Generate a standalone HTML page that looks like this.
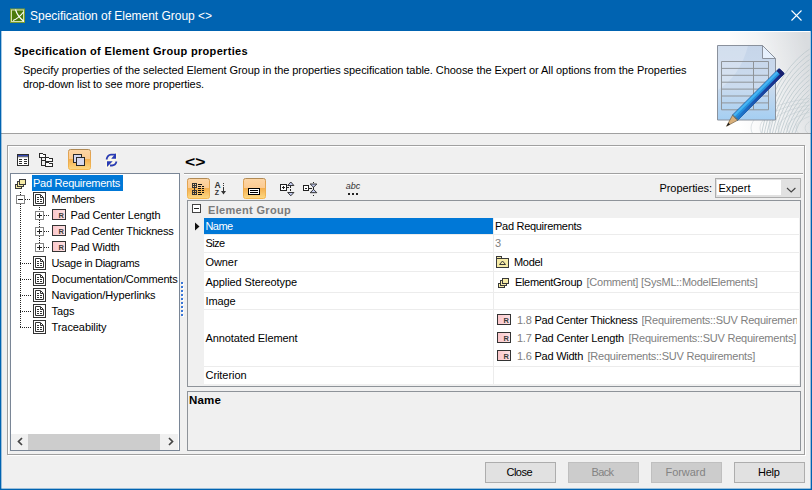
<!DOCTYPE html>
<html><head><meta charset="utf-8"><title>Specification of Element Group</title>
<style>
html,body{margin:0;padding:0}
body{width:812px;height:490px;position:relative;overflow:hidden;background:#f0f0f0;font-family:"Liberation Sans",sans-serif}
.t{position:absolute;white-space:pre;line-height:16px;height:16px}
#shapes{position:absolute;left:0;top:0}
.ic{font-family:"Liberation Sans",sans-serif}
</style></head><body>
<svg id="shapes" width="812" height="490" viewBox="0 0 812 490">
<defs>
<linearGradient id="og" x1="0" y1="0" x2="0" y2="1">
<stop offset="0" stop-color="#fdd6a6"/><stop offset="0.46" stop-color="#fccb92"/><stop offset="0.5" stop-color="#f5b050"/><stop offset="1" stop-color="#fcd984"/>
</linearGradient>
<linearGradient id="hg" x1="0" y1="0.550" x2="1" y2="0.250">
<stop offset="0" stop-color="#ffffff"/><stop offset="0.45" stop-color="#f3f4f5"/><stop offset="1" stop-color="#d9dcdf"/>
</linearGradient>
<linearGradient id="arcg" gradientUnits="userSpaceOnUse" x1="720" y1="0" x2="810" y2="0"><stop offset="0" stop-color="#e4e8ea"/><stop offset="0.5" stop-color="#eceff0"/><stop offset="1" stop-color="#f6f7f8"/></linearGradient>
<linearGradient id="docg" x1="0" y1="0" x2="0" y2="1">
<stop offset="0" stop-color="#c6d5e9"/><stop offset="0.55" stop-color="#cbdbee"/><stop offset="1" stop-color="#a4cef2"/>
</linearGradient>
<linearGradient id="pen2" x1="0" y1="0" x2="1" y2="0"><stop offset="0" stop-color="#1f7fd2"/><stop offset="0.5" stop-color="#1b4aa6"/><stop offset="1" stop-color="#1a237e"/></linearGradient>
<linearGradient id="peng" x1="0" y1="0" x2="1" y2="1">
<stop offset="0" stop-color="#1a2a80"/><stop offset="0.45" stop-color="#1a4aa8"/><stop offset="0.5" stop-color="#1e9be0"/><stop offset="1" stop-color="#35b3f0"/>
</linearGradient>
<linearGradient id="ob" x1="0" y1="0" x2="0" y2="1"><stop offset="0" stop-color="#b08a55"/><stop offset="0.15" stop-color="#e0a050"/><stop offset="1" stop-color="#f5b850"/></linearGradient>
<linearGradient id="pk" x1="0" y1="0" x2="1" y2="0"><stop offset="0" stop-color="#fbc6ca"/><stop offset="1" stop-color="#fde2e4"/></linearGradient>
<g id="eg">
<rect x="0.5" y="5.5" width="6" height="4" fill="#f6eba6" stroke="#3a3a3a"/>
<rect x="2.5" y="2.5" width="6" height="5" fill="#f6eba6" stroke="#3a3a3a"/>
<rect x="4.5" y="0.5" width="6" height="5" fill="#f6eba6" stroke="#3a3a3a"/>
</g>
<g id="ric">
<rect x="0.5" y="0.5" width="13" height="10" fill="url(#pk)" stroke="#333"/>
<text x="6.600" y="9" font-size="7.500" font-weight="bold" fill="#3a3a3a" class="ic">R</text>
</g>
<g id="doc" shape-rendering="crispEdges">
<rect x="0.5" y="0.5" width="12" height="13" fill="#fff" stroke="#333"/>
<path d="M2.500 2.500H7.500L10.500 5.500V11.500H2.500Z" fill="#fff" stroke="#333" shape-rendering="auto"/>
<path d="M7.500 3V5.500H10" fill="none" stroke="#333" shape-rendering="auto"/>
<path d="M4 5.500h2M4 7.500h2M7 7.500h2M4 9.500h2M7 9.500h2" stroke="#333"/>
</g>
<g id="plus">
<rect x="0.5" y="0.5" width="8" height="8" fill="#fff" stroke="#848484"/>
<path d="M2 4.5h5M4.5 2v5" stroke="#222"/>
</g>
<g id="minus">
<rect x="0.5" y="0.5" width="8" height="8" fill="#fff" stroke="#848484"/>
<path d="M2 4.5h5" stroke="#222"/>
</g>
</defs>
<g shape-rendering="crispEdges">
<!-- header -->
<rect x="0" y="31" width="812" height="102" fill="#fff"/>
<rect x="730" y="32" width="79.500" height="101" fill="url(#hg)"/>
<rect x="0" y="133" width="812" height="1" fill="#a0a0a0"/>
<!-- title bar -->
<rect x="0" y="0" width="812" height="31" fill="#0063b1"/>
<!-- etched panel -->
<rect x="8.5" y="146.5" width="797" height="309" fill="none" stroke="#fff"/>
<rect x="7.5" y="145.5" width="797" height="309" fill="none" stroke="#a0a0a0"/>
<!-- left toolbar selected button -->
</g>
<rect x="68.5" y="149.5" width="22" height="20" rx="2" fill="url(#og)" stroke="url(#ob)"/>
<g shape-rendering="crispEdges">
<!-- tree box -->
<rect x="10.5" y="173.5" width="169" height="277" fill="#fff" stroke="#7a8696"/>
<rect x="32" y="175" width="91" height="16" fill="#0078d7"/>
<!-- scrollbar -->
<rect x="11" y="434" width="167" height="16" fill="#f0f0f0"/>
<rect x="28" y="434" width="132" height="16" fill="#cdcdcd"/>
<!-- tree dotted lines -->
<path d="M20.5 192v4M20.5 204v124" stroke="#222" stroke-dasharray="1 1" fill="none"/>
<path d="M25 199.5h6M20 263.5h11M20 279.5h11M20 295.5h11M20 311.5h11M20 327.5h11" stroke="#222" stroke-dasharray="1 1" fill="none"/>
<path d="M39.5 207v4M39.5 220v7M39.5 236v7" stroke="#222" stroke-dasharray="1 1" fill="none"/>
<path d="M44 215.5h6M44 231.5h6M44 247.5h6" stroke="#222" stroke-dasharray="1 1" fill="none"/>
<!-- splitter dots -->
<rect x="182" y="283" width="2" height="2" fill="#fff"/><rect x="181" y="282" width="2" height="2" fill="#3a76d6"/><rect x="182" y="287" width="2" height="2" fill="#fff"/><rect x="181" y="286" width="2" height="2" fill="#3a76d6"/><rect x="182" y="291" width="2" height="2" fill="#fff"/><rect x="181" y="290" width="2" height="2" fill="#3a76d6"/><rect x="182" y="295" width="2" height="2" fill="#fff"/><rect x="181" y="294" width="2" height="2" fill="#3a76d6"/><rect x="182" y="299" width="2" height="2" fill="#fff"/><rect x="181" y="298" width="2" height="2" fill="#3a76d6"/><rect x="182" y="303" width="2" height="2" fill="#fff"/><rect x="181" y="302" width="2" height="2" fill="#3a76d6"/><rect x="182" y="307" width="2" height="2" fill="#fff"/><rect x="181" y="306" width="2" height="2" fill="#3a76d6"/><rect x="182" y="311" width="2" height="2" fill="#fff"/><rect x="181" y="310" width="2" height="2" fill="#3a76d6"/><rect x="182" y="315" width="2" height="2" fill="#fff"/><rect x="181" y="314" width="2" height="2" fill="#3a76d6"/>
<!-- right: separator -->
<rect x="184" y="173" width="619" height="1" fill="#a0a0a0"/>
<rect x="184" y="174" width="619" height="1" fill="#fff"/>
</g>
<!-- right toolbar selected buttons -->
<rect x="187.5" y="178.5" width="22" height="20" rx="2" fill="url(#og)" stroke="url(#ob)"/>
<rect x="243.5" y="178.5" width="22" height="20" rx="2" fill="url(#og)" stroke="url(#ob)"/>
<g shape-rendering="crispEdges">
<!-- combo -->
<rect x="715.5" y="178.5" width="85" height="19" fill="#e1e1e1" stroke="#adadad"/>
<rect x="717" y="180" width="64" height="15" fill="#fff"/>
<!-- table -->
<rect x="187.5" y="200.5" width="613" height="186" fill="#f0f0f0" stroke="#8e9399"/>
<rect x="204" y="218" width="595" height="166" fill="#fff"/>
<rect x="204" y="218" width="289" height="16" fill="#0078d7"/>
<path d="M204 234.5h595M204 252.5h595M204 271.5h595M204 292.5h595M204 309.5h595M204 366.5h595M493.5 218v166" stroke="#ececec" fill="none"/>
<!-- description box -->
<rect x="187.5" y="391.5" width="613" height="59" fill="#f0f0f0" stroke="#8e9399"/>
<!-- buttons -->
<rect x="485.5" y="462.5" width="70" height="20" fill="#e1e1e1" stroke="#adadad"/>
<rect x="568.5" y="462.5" width="70" height="20" fill="#cccccc" stroke="#bfbfbf"/>
<rect x="651.5" y="462.5" width="70" height="20" fill="#cccccc" stroke="#bfbfbf"/>
<rect x="734.5" y="462.5" width="70" height="20" fill="#e1e1e1" stroke="#adadad"/>
<!-- window border -->
<rect x="0" y="31" width="1" height="459" fill="#0063b1"/>
<rect x="1" y="31" width="1" height="459" fill="#0063b1" opacity="0.35"/>
<rect x="811" y="31" width="1" height="459" fill="#0063b1"/>
<rect x="810" y="31" width="1" height="459" fill="#0063b1" opacity="0.35"/>
<rect x="0" y="489" width="812" height="1" fill="#0063b1"/>
<rect x="0" y="488" width="812" height="1" fill="#0063b1" opacity="0.35"/>
</g>
<!-- ICONS -->
<!-- title icon -->
<g>
<rect x="10" y="8.500" width="15" height="14.500" fill="#7c9c2c"/>
<rect x="11.500" y="10" width="12" height="11.500" fill="#4c7a0c" stroke="#d4e0b0" stroke-width="1"/>
<path d="M15.500 9.500q2 7 8.500 12M13 20.500q6-2.500 10.500-8.500" stroke="#fff" stroke-width="1.200" fill="none"/>
</g>
<!-- close X -->
<path d="M791.5 10.5l10 10M801.5 10.5l-10 10" stroke="#fff" stroke-width="1.1" fill="none"/>
<!-- header image -->
<clipPath id="hclip"><rect x="690" y="32" width="119.500" height="101"/></clipPath>
<g clip-path="url(#hclip)">
<g fill="none" stroke="#bcc8cd" stroke-width="0.9" opacity="0.9">
<ellipse cx="845" cy="165" rx="56.0" ry="72.2"/><ellipse cx="845" cy="165" rx="58.5" ry="76.4"/><ellipse cx="845" cy="165" rx="61.0" ry="80.6"/><ellipse cx="845" cy="165" rx="63.5" ry="84.9"/><ellipse cx="845" cy="165" rx="66.0" ry="89.3"/><ellipse cx="845" cy="165" rx="68.5" ry="93.8"/><ellipse cx="845" cy="165" rx="71.0" ry="98.3"/><ellipse cx="845" cy="165" rx="73.5" ry="103.0"/><ellipse cx="845" cy="165" rx="76.0" ry="107.7"/><ellipse cx="845" cy="165" rx="78.5" ry="112.5"/><ellipse cx="845" cy="165" rx="81.0" ry="117.3"/><ellipse cx="845" cy="165" rx="83.5" ry="122.3"/><ellipse cx="845" cy="165" rx="86.0" ry="127.3"/>
<ellipse cx="845" cy="128" rx="40" ry="14" opacity="0.6"/><ellipse cx="845" cy="128" rx="49" ry="17" opacity="0.6"/><ellipse cx="845" cy="128" rx="58" ry="20" opacity="0.6"/><ellipse cx="845" cy="128" rx="67" ry="23" opacity="0.6"/><ellipse cx="845" cy="128" rx="76" ry="26" opacity="0.6"/><ellipse cx="845" cy="128" rx="85" ry="29" opacity="0.6"/><ellipse cx="845" cy="128" rx="94" ry="32" opacity="0.6"/>
</g>
<path d="M717.500 45.500h45l13 13v61.500h-58z" fill="url(#docg)" stroke="#8a919c"/>
<path d="M718 46h30q-8 30-30 44z" fill="#fff" opacity="0.22"/>
<path d="M762.500 45.500v13h13z" fill="#e6f0fd" stroke="#8a919c"/>
<path d="M721.500 61.500h47v48.300h-47zM721.500 68.400h47M721.500 75.300h47M721.500 82.200h47M721.500 89.100h47M721.500 96h47M721.500 102.900h47M753.500 61.500v48.300" fill="none" stroke="#8f9499"/>
<g transform="translate(726.500 126.300) rotate(-45)">
<path d="M0 0L12.500 -3.700V3.700z" fill="#d9b07a" stroke="#6b5536" stroke-width="0.600"/>
<path d="M0 0L3.800 -1.200V1.200z" fill="#1a1a1a"/>
<rect x="12" y="-3.700" width="66" height="7.400" fill="#2590de" stroke="#14418a" stroke-width="0.700"/>
<rect x="12" y="-3.400" width="63" height="2.300" fill="#45b4f2"/>
<rect x="12" y="0.800" width="66" height="2.900" fill="url(#pen2)"/>
<path d="M74.500 -3.700h2.500q1.500 0 1.500 1.500v4.400q0 1.500 -1.500 1.500h-2.500z" fill="#19206f"/>
<path d="M12 -3.700q1.800 1.200 0 2.500q1.800 1.200 0 2.500q1.800 1.200 0 2.400" fill="#d9b07a" stroke="#6b5536" stroke-width="0.500"/>
</g>
</g>
<!-- left toolbar icons -->
<g shape-rendering="crispEdges">
<rect x="17.500" y="154.500" width="11" height="11" fill="#fff" stroke="#2e2e2e"/>
<rect x="18" y="155" width="10" height="1.500" fill="#3448b4" shape-rendering="auto"/>
<rect x="18" y="156.500" width="10" height="0.700" fill="#2e2e2e" shape-rendering="auto"/>
<path d="M19 159.500h3M24 159.500h3M19 161.500h3M24 161.500h3M19 163.500h3M24 163.500h3" stroke="#2e2e2e"/>
</g>
<g shape-rendering="crispEdges" fill="#fff" stroke="#2a2a2a">
<path d="M39.500 153.500h3l1 1h2v3h-6z"/>
<path d="M45.500 157.500h3l1 1h3v3h-7z"/>
<path d="M45.500 162.500h3l1 1h3v3h-7z"/>
<path d="M41.500 157.500v7.500h4M41.500 160h4" fill="none"/>
</g>
<g shape-rendering="crispEdges">
<rect x="73.500" y="154.500" width="8" height="8" fill="#d6d8ee" stroke="#2a2a2a"/>
<rect x="76.500" y="157.500" width="8" height="8" fill="#d6d8ee" stroke="#2a2a2a"/>
</g>
<g fill="none" stroke="#fffbe8" stroke-width="3" stroke-linejoin="round" opacity="0.85">
<path d="M106.500 159.500q1-4.500 4.500-4.800h4"/><path d="M116 153v5.800h-4.800z" fill="#fffbe8"/>
<path d="M116.500 161.500q-1 3.800-4.500 4h-2"/><path d="M107 167v-5.800h5.700z" fill="#fffbe8"/>
</g>
<g fill="none" stroke="#2a3cb4" stroke-width="1.800">
<path d="M106.500 159.500q1-4.500 4.500-4.800h4"/>
<path d="M116.500 161.500q-1 3.800-4.500 4h-2"/>
</g>
<path d="M116 153v5.800h-4.800z" fill="#2a3cb4"/>
<path d="M107 167v-5.800h5.700z" fill="#2a3cb4"/>
<!-- tree icons -->
<use href="#eg" x="15" y="179"/>
<use href="#minus" x="16" y="195"/>
<use href="#doc" x="33" y="192"/>
<use href="#plus" x="35" y="211"/><use href="#ric" x="52" y="209"/>
<use href="#plus" x="35" y="227"/><use href="#ric" x="52" y="225"/>
<use href="#plus" x="35" y="243"/><use href="#ric" x="52" y="241"/>
<use href="#doc" x="33" y="256"/>
<use href="#doc" x="33" y="272"/>
<use href="#doc" x="33" y="288"/>
<use href="#doc" x="33" y="304"/>
<use href="#doc" x="33" y="320"/>
<!-- scrollbar arrows -->
<path d="M22 438l-3.500 3.500 3.500 3.500M169 438l3.500 3.500-3.500 3.500" fill="none" stroke="#444" stroke-width="1.700"/>
<!-- right toolbar icons -->
<g shape-rendering="crispEdges" stroke="#333" fill="none">
<rect x="192.500" y="183.500" width="4" height="4"/><path d="M192.500 185.500h4M194.500 183.500v4"/>
<rect x="192.500" y="190.500" width="4" height="4"/><path d="M192.500 192.500h4M194.500 190.500v4"/>
<path d="M194.500 188v2"/>
<path d="M198 184.500h4M198 186.500h3M202 186.500h2M198 188.500h3M202 188.500h2M198 190.500h3M202 190.500h2M198 192.500h3M202 192.500h2M198 194.500h4" stroke="#111"/>
</g>
<text x="214.400" y="188.300" font-size="8.500" font-weight="bold" fill="#333" class="ic">A</text>
<text x="214.800" y="194.800" font-size="7" font-weight="bold" fill="#333" class="ic">Z</text>
<path d="M223.500 183v1M223.500 185v1M223.500 187v7" stroke="#333" shape-rendering="crispEdges"/>
<path d="M221 191h5l-2.500 3.500z" fill="#333"/>
<g shape-rendering="crispEdges">
<rect x="248.500" y="188.500" width="11" height="6" fill="#fff" stroke="#000"/>
<path d="M250 190.500h8M250 192.500h8" stroke="#000"/>
</g>
<g shape-rendering="crispEdges" stroke="#222" fill="none">
<rect x="280.500" y="184.500" width="6" height="6" fill="#fff"/><path d="M282 187.500h3M283.500 186v3"/>
<path d="M287 187.500h2"/>
<path d="M290.500 186v2M290.500 189v2"/>
<rect x="303.500" y="185.500" width="5" height="5" fill="#fff"/><path d="M305 188.500h2"/>
<path d="M309 188.500h3"/>
<path d="M313.500 182v1M313.500 184v9M313.500 195v1"/>
</g>
<path d="M287.700 185.500h6.200l-3.100-3.500z" fill="#c4ccf2" stroke="#222" stroke-width="0.9"/>
<path d="M287.700 192.500h6.200l-3.100 3.300z" fill="#c4ccf2" stroke="#222" stroke-width="0.9"/>
<path d="M310.200 184h6.600l-3.300 3.300z" fill="#c4ccf2" stroke="#222" stroke-width="0.9"/>
<path d="M310.200 192.700h6.600l-3.300-3.300z" fill="#c4ccf2" stroke="#222" stroke-width="0.9"/>
<text x="345.800" y="189" font-size="9" font-style="italic" fill="#333" class="ic">abc</text>
<path d="M348 194h2M352 194h2M356 194h2" stroke="#222" stroke-width="2" shape-rendering="crispEdges"/>
<!-- combo chevron -->
<path d="M787 188l4.200 4 4.200-4" fill="none" stroke="#444" stroke-width="1.100"/>
<!-- table icons -->
<g shape-rendering="crispEdges"><rect x="192.500" y="204.500" width="8" height="8" fill="#fff" stroke="#444"/><path d="M194 208.500h5" stroke="#222"/></g>
<path d="M195 222.500l4.500 4-4.500 4z" fill="#111"/>
<g shape-rendering="crispEdges">
<path d="M496.500 258.500v-2h5v2" fill="#f6eba6" stroke="#3a3a3a"/>
<rect x="496.500" y="258.500" width="12" height="9" fill="#f6eba6" stroke="#3a3a3a"/>
</g>
<path d="M499.500 264.500h6l-3-3.500z" fill="none" stroke="#3a3a3a"/>
<use href="#eg" x="498" y="278"/>
<use href="#ric" x="497" y="314"/>
<use href="#ric" x="497" y="332"/>
<use href="#ric" x="497" y="350"/>
</svg>
<div class="t" style="left:30px;top:8.0px;font-size:12px;color:#fff;letter-spacing:-0.024px;">Specification of Element Group &lt;&gt;</div>
<div class="t" style="left:14px;top:43.0px;font-size:11px;color:#000;letter-spacing:0.325px;font-weight:bold;">Specification of Element Group properties</div>
<div class="t" style="left:23px;top:62.0px;font-size:11px;color:#000;letter-spacing:-0.061px;">Specify properties of the selected Element Group in the properties specification table. Choose the Expert or All options from the Properties</div>
<div class="t" style="left:23px;top:76.0px;font-size:11px;color:#000;letter-spacing:-0.096px;">drop-down list to see more properties.</div>
<div class="t" style="left:33px;top:175.0px;font-size:11px;color:#fff;letter-spacing:-0.257px;">Pad Requirements</div>
<div class="t" style="left:51.5px;top:191.0px;font-size:11px;color:#000;letter-spacing:-0.406px;">Members</div>
<div class="t" style="left:70.5px;top:207.0px;font-size:11px;color:#000;letter-spacing:-0.139px;">Pad Center Length</div>
<div class="t" style="left:70.5px;top:223.0px;font-size:11px;color:#000;letter-spacing:-0.252px;">Pad Center Thickness</div>
<div class="t" style="left:70.5px;top:239.0px;font-size:11px;color:#000;letter-spacing:-0.194px;">Pad Width</div>
<div class="t" style="left:51.5px;top:255.0px;font-size:11px;color:#000;letter-spacing:-0.326px;">Usage in Diagrams</div>
<div class="t" style="left:51.5px;top:271.0px;font-size:11px;color:#000;letter-spacing:-0.192px;">Documentation/Comments</div>
<div class="t" style="left:51.5px;top:287.0px;font-size:11px;color:#000;letter-spacing:-0.114px;">Navigation/Hyperlinks</div>
<div class="t" style="left:51.5px;top:303.0px;font-size:11px;color:#000;letter-spacing:-0.062px;">Tags</div>
<div class="t" style="left:51.5px;top:319.0px;font-size:11px;color:#000;letter-spacing:-0.070px;">Traceability</div>
<div class="t" style="left:185px;top:153.5px;font-size:15px;color:#000;font-weight:bold;transform:scaleX(1.1693);transform-origin:0 50%;">&lt;&gt;</div>
<div class="t" style="left:659.5px;top:180.0px;font-size:11px;color:#000;letter-spacing:-0.064px;">Properties:</div>
<div class="t" style="left:718.5px;top:180.0px;font-size:11px;color:#000;letter-spacing:0.034px;">Expert</div>
<div class="t" style="left:208px;top:202.0px;font-size:11px;color:#7a7a7a;letter-spacing:0.320px;font-weight:bold;">Element Group</div>
<div class="t" style="left:205.5px;top:218.0px;font-size:11px;color:#fff;letter-spacing:-0.586px;">Name</div>
<div class="t" style="left:205.5px;top:235.0px;font-size:11px;color:#000;letter-spacing:-0.602px;">Size</div>
<div class="t" style="left:205.5px;top:254.0px;font-size:11px;color:#000;letter-spacing:-0.081px;">Owner</div>
<div class="t" style="left:205.5px;top:274.0px;font-size:11px;color:#000;letter-spacing:-0.081px;">Applied Stereotype</div>
<div class="t" style="left:205.5px;top:293.0px;font-size:11px;color:#000;letter-spacing:-0.116px;">Image</div>
<div class="t" style="left:205.5px;top:330.0px;font-size:11px;color:#000;letter-spacing:-0.093px;">Annotated Element</div>
<div class="t" style="left:205.5px;top:367.0px;font-size:11px;color:#000;letter-spacing:-0.064px;">Criterion</div>
<div class="t" style="left:495px;top:218.0px;font-size:11px;color:#000;letter-spacing:-0.288px;">Pad Requirements</div>
<div class="t" style="left:495px;top:235.0px;font-size:11px;color:#808080;letter-spacing:-0.125px;">3</div>
<div class="t" style="left:514px;top:254.0px;font-size:11px;color:#000;letter-spacing:-0.294px;">Model</div>
<div class="t" style="left:515px;top:274.0px;font-size:11px;color:#000;letter-spacing:-0.328px;">ElementGroup</div>
<div class="t" style="left:586.5px;top:274.0px;font-size:11px;color:#808080;letter-spacing:-0.235px;">[Comment] [SysML::ModelElements]</div>
<div class="t" style="left:517px;top:312.0px;font-size:11px;color:#808080;letter-spacing:-0.266px;">1.8</div>
<div class="t" style="left:534.5px;top:312.0px;font-size:11px;color:#000;letter-spacing:-0.252px;">Pad Center Thickness</div>
<div class="t" style="left:641.5px;top:312.0px;font-size:11px;color:#808080;letter-spacing:-0.230px;width:155.5px;overflow:hidden;">[Requirements::SUV Requirements]</div>
<div class="t" style="left:517px;top:330.0px;font-size:11px;color:#808080;letter-spacing:-0.266px;">1.7</div>
<div class="t" style="left:534.5px;top:330.0px;font-size:11px;color:#000;letter-spacing:-0.168px;">Pad Center Length</div>
<div class="t" style="left:628.5px;top:330.0px;font-size:11px;color:#808080;letter-spacing:-0.230px;">[Requirements::SUV Requirements]</div>
<div class="t" style="left:517px;top:348.0px;font-size:11px;color:#808080;letter-spacing:-0.266px;">1.6</div>
<div class="t" style="left:534.5px;top:348.0px;font-size:11px;color:#000;letter-spacing:-0.250px;">Pad Width</div>
<div class="t" style="left:587.5px;top:348.0px;font-size:11px;color:#808080;letter-spacing:-0.230px;">[Requirements::SUV Requirements]</div>
<div class="t" style="left:189px;top:392.0px;font-size:11.5px;color:#000;letter-spacing:0.168px;font-weight:bold;">Name</div>
<div class="t" style="left:506.5px;top:464.0px;font-size:11px;color:#000;letter-spacing:-0.525px;">Close</div>
<div class="t" style="left:591.5px;top:464.0px;font-size:11px;color:#838383;letter-spacing:-0.617px;">Back</div>
<div class="t" style="left:665.5px;top:464.0px;font-size:11px;color:#838383;letter-spacing:-0.049px;">Forward</div>
<div class="t" style="left:758px;top:464.0px;font-size:11px;color:#000;letter-spacing:-0.281px;">Help</div>
</body></html>
